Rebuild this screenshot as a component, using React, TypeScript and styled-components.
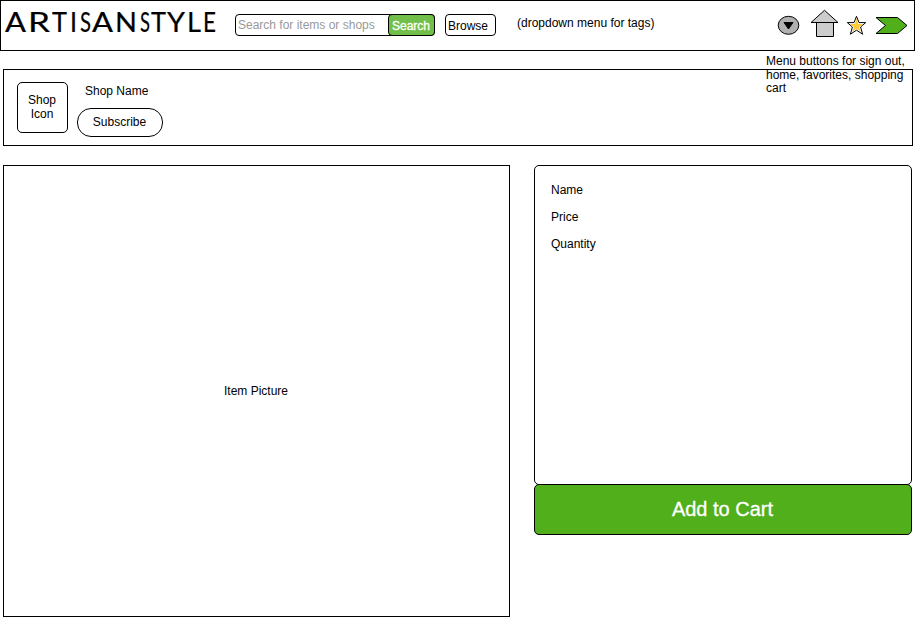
import React from "react";
import styled, { createGlobalStyle } from "styled-components";

const GlobalStyle = createGlobalStyle`
  *, *::before, *::after { box-sizing: border-box; }
  body {
    margin: 0;
    background: #fff;
    color: #000;
    font: 12px/13.5px "Liberation Sans", Arial, Helvetica, sans-serif;
    overflow: hidden;
  }
  button, input { font: inherit; color: inherit; margin: 0; }
`;

const Page = styled.div`
  width: 915px;
  height: 617px;
`;

const Header = styled.header`
  position: relative;
  display: flex;
  align-items: flex-start;
  height: 51px;
  border: 1px solid #000;
`;

const Logo = styled.svg`
  display: block;
  width: 234px;
  height: 49px;
  flex: none;
  font-family: Lato, sans-serif;
  font-size: 26px;
  stroke: #000;
  stroke-width: 0.2px;
`;

const SearchForm = styled.div`
  display: flex;
  width: 200px;
  height: 22px;
  margin-top: 13px;
  border: 1px solid #000;
  border-radius: 4px;
`;

const SearchInput = styled.input`
  flex: 1;
  min-width: 0;
  height: 20px;
  padding: 0 0 0 2px;
  border: 0;
  background: none;
  outline: 0;
  &::placeholder { color: #999; opacity: 1; }
`;

const SmallButton = styled.button<{ $green?: boolean }>`
  flex: none;
  height: 22px;
  padding: 3px 0 0 ${(p) => (p.$green ? 3 : 2)}px;
  width: ${(p) => (p.$green ? 47 : 51)}px;
  margin: ${(p) => (p.$green ? "-1px -1px 0 0" : "13px 0 0 10px")};
  text-align: left;
  white-space: nowrap;
  border: 1px solid #000;
  border-radius: 4px;
  background: ${(p) => (p.$green ? "#71bf49" : "#fff")};
  color: ${(p) => (p.$green ? "#fff" : "#000")};
  -webkit-text-stroke: ${(p) => (p.$green ? "0.3px #fff" : "0")};
`;

const TagsNote = styled.span`
  margin: 16px 0 0 21px;
`;

const Actions = styled.nav`
  display: flex;
  margin-left: auto;
`;

const ActionIcons = styled.svg`
  display: block;
  width: 139px;
  height: 49px;
`;

const MenuNote = styled.p`
  position: absolute;
  top: 54px;
  left: 765px;
  width: 146px;
  margin: 0;
`;

const ShopBanner = styled.section`
  display: flex;
  width: 910px;
  height: 77px;
  margin: 18px 0 0 3px;
  padding: 12px 13px;
  border: 1px solid #000;
`;

const ShopIcon = styled.div`
  display: flex;
  align-items: center;
  justify-content: center;
  width: 51px;
  height: 51px;
  padding: 0 9px 0 8px;
  text-align: center;
  border: 1px solid #000;
  border-radius: 5px;
`;

const ShopInfo = styled.div`
  display: flex;
  flex-direction: column;
  align-items: flex-start;
  margin: 3px 0 0 9px;
`;

const ShopName = styled.span`
  height: 13px;
  margin-left: 8px;
`;

const Subscribe = styled.button`
  flex: none;
  width: 86px;
  height: 29px;
  margin-top: 10px;
  padding: 1px 1px 0 0;
  border: 1px solid #000;
  border-radius: 14px;
  background: #fff;
`;

const Product = styled.main`
  display: flex;
  gap: 24px;
  margin: 19px 0 0 3px;
`;

const Picture = styled.div`
  display: flex;
  align-items: center;
  justify-content: center;
  width: 507px;
  height: 452px;
  padding: 1px 1px 0 0;
  border: 1px solid #000;
`;

const Purchase = styled.div`
  width: 378px;
`;

const Details = styled.div`
  display: flex;
  flex-direction: column;
  height: 320px;
  padding: 18px 16px;
  line-height: 13px;
  gap: 14px;
  border: 1px solid #000;
  border-radius: 5px;
`;

const AddToCart = styled.button`
  display: block;
  width: 100%;
  height: 51px;
  margin-top: -1px;
  padding: 0 1px 2px 0;
  font-size: 20px;
  line-height: 24px;
  color: #fff;
  -webkit-text-stroke: 0.3px #fff;
  background: #50af1b;
  border: 1px solid #000;
  border-radius: 5px;
`;

const letters: [string, number, number][] = [
  ["A", 5, 21],
  ["R", 28, 22],
  ["T", 52, 15],
  ["I", 70, 7],
  ["S", 80, 11],
  ["A", 92, 21],
  ["N", 115, 22],
  ["S", 140, 10],
  ["T", 151, 15],
  ["Y", 167, 18],
  ["L", 187, 14],
  ["E", 203, 13],
];

export default function App() {
  return (
    <>
      <GlobalStyle />
      <Page>
        <Header>
          <Logo viewBox="1 1 234 49">
            <text y="31.5">
              {letters.map(([ch, x, w]) => (
                <tspan key={x} x={x} textLength={w} lengthAdjust="spacingAndGlyphs">
                  {ch}
                </tspan>
              ))}
            </text>
          </Logo>
          <SearchForm>
            <SearchInput placeholder="Search for items or shops" />
            <SmallButton $green>Search</SmallButton>
          </SearchForm>
          <SmallButton>Browse</SmallButton>
          <TagsNote>(dropdown menu for tags)</TagsNote>
          <Actions>
            <ActionIcons viewBox="775 1 139 49" stroke="#000" strokeWidth="1">
              <ellipse cx="788.5" cy="25.3" rx="10.3" ry="9" fill="#b0b0b0" />
              <path d="M784 22.5H793L788.5 29Z" fill="#000" />
              <path d="M816.5 22.5H833.5V36.5H816.5Z" fill="#ccc" />
              <path d="M824.5 10.3L838 22.5H811Z" fill="#ccc" />
              <path d="M856.5 16.3L859 22.6H865.7L860.6 27L862.6 34.2L856.5 30.2L850.4 34.2L852.4 27L847.3 22.6H854Z" fill="#fff" />
              <path d="M856.5 18.5L858.3 24H863L859.2 27L860.7 31.5L856.5 28.7L852.3 31.5L853.8 27L850 24H854.7Z" fill="#ffcc33" stroke="none" />
              <path d="M876 17.5H897.5L907 25.5L897.5 33.5H876L885.5 25.5Z" fill="#50af1b" />
            </ActionIcons>
          </Actions>
          <MenuNote>Menu buttons for sign out, home, favorites, shopping cart</MenuNote>
        </Header>
        <ShopBanner>
          <ShopIcon>Shop Icon</ShopIcon>
          <ShopInfo>
            <ShopName>Shop Name</ShopName>
            <Subscribe>Subscribe</Subscribe>
          </ShopInfo>
        </ShopBanner>
        <Product>
          <Picture>Item Picture</Picture>
          <Purchase>
            <Details>
              <span>Name</span>
              <span>Price</span>
              <span>Quantity</span>
            </Details>
            <AddToCart>Add to Cart</AddToCart>
          </Purchase>
        </Product>
      </Page>
    </>
  );
}
